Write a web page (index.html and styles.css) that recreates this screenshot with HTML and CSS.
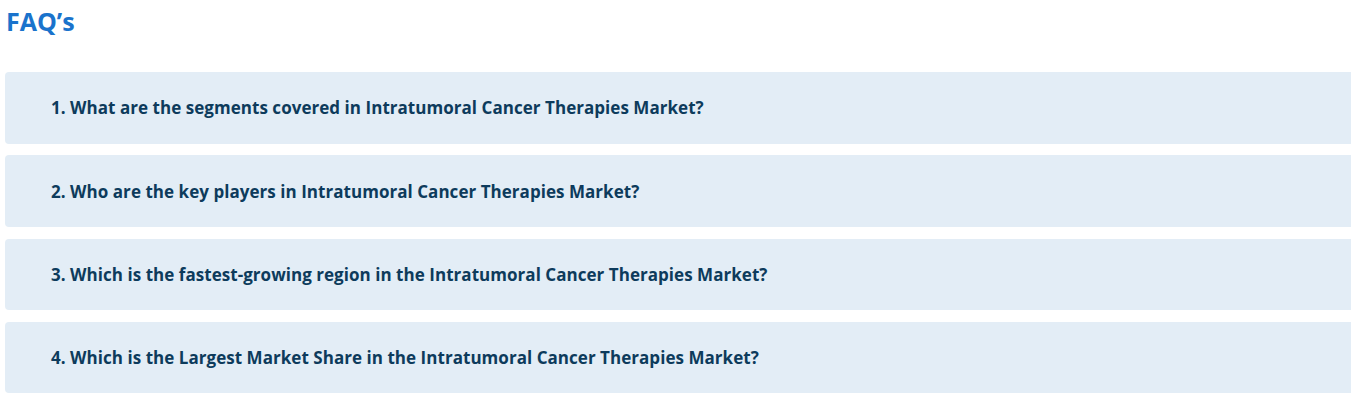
FILE: index.html
```html
<!DOCTYPE html>
<html>
<head>
<meta charset="utf-8">
<link rel="stylesheet" href="styles.css">
</head>
<body>
<section class="faq">
  <h2 class="faq-title">FAQ’s</h2>
  <div class="faq-list">
    <div class="faq-item">1. What are the segments covered in Intratumoral Cancer Therapies Market?</div>
    <div class="faq-item">2. Who are the key players in Intratumoral Cancer Therapies Market?</div>
    <div class="faq-item">3. Which is the fastest-growing region in the Intratumoral Cancer Therapies Market?</div>
    <div class="faq-item">4. Which is the Largest Market Share in the Intratumoral Cancer Therapies Market?</div>
  </div>
</section>
</body>
</html>
```
FILE: styles.css
```css
html, body {
  margin: 0;
  padding: 0;
  background: #ffffff;
  overflow: hidden;
}
.faq {
  padding: 5px 0 0 5px;
  font-family: "Open Sans", Lato, sans-serif;
}
.faq-title {
  margin: 0 0 0 1px;
  font-size: 25px;
  line-height: 32px;
  font-weight: 700;
  color: #1a73cc;
}
.faq-list {
  margin-top: 35px;
  display: flex;
  flex-direction: column;
  gap: 11.7px;
  width: 1360px;
}
.faq-item {
  height: 71.6px;
  display: flex;
  align-items: center;
  padding-left: 46px;
  background: #e3edf6;
  border-radius: 4px;
  font-size: 17px;
  letter-spacing: 0.04px;
  font-weight: 700;
  color: #0d3b5c;
}
```
